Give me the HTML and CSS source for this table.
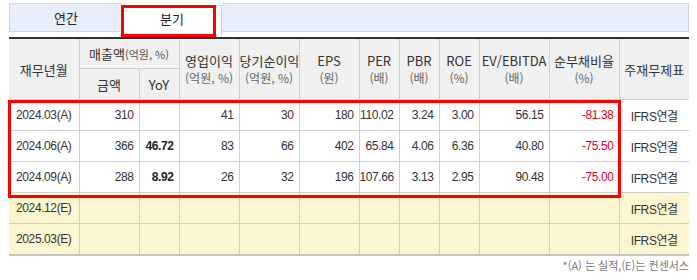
FILE: index.html
```html
<!DOCTYPE html>
<html lang="ko">
<head>
<meta charset="utf-8">
<link rel="stylesheet" href="styles.css">
</head>
<body>
<div class="wrap">
  <div class="tabs">
    <div class="tab tab-annual">연간</div>
    <div class="tab tab-quarter">분기</div>
    <div class="tab tab-rest"></div>
    <div class="mark mark-tab"></div>
  </div>
  <div class="table-box">
    <table class="fin">
      <colgroup>
        <col class="w70"><col class="w60"><col class="w40"><col class="w60"><col class="w60"><col class="w60">
        <col class="w40"><col class="w40"><col class="w40"><col class="w70"><col class="w70"><col class="w70">
      </colgroup>
      <thead>
        <tr class="h1">
          <th rowspan="2">재무년월</th>
          <th colspan="2">매출액<span class="unit-s">(억원, %)</span></th>
          <th rowspan="2">영업이익<br><span class="unit">(억원, %)</span></th>
          <th rowspan="2">당기순이익<br><span class="unit">(억원, %)</span></th>
          <th rowspan="2">EPS<br><span class="unit">(원)</span></th>
          <th rowspan="2">PER<br><span class="unit">(배)</span></th>
          <th rowspan="2">PBR<br><span class="unit">(배)</span></th>
          <th rowspan="2">ROE<br><span class="unit">(%)</span></th>
          <th rowspan="2">EV/EBITDA<br><span class="unit">(배)</span></th>
          <th rowspan="2">순부채비율<br><span class="unit">(%)</span></th>
          <th rowspan="2">주재무제표</th>
        </tr>
        <tr class="h2">
          <th>금액</th>
          <th>YoY</th>
        </tr>
      </thead>
      <tbody>
        <tr>
          <td class="c">2024.03(A)</td><td>310</td><td class="b"></td><td>41</td><td>30</td><td>180</td>
          <td>110.02</td><td>3.24</td><td>3.00</td><td>56.15</td><td class="neg">-81.38</td><td class="c">IFRS연결</td>
        </tr>
        <tr>
          <td class="c">2024.06(A)</td><td>366</td><td class="b">46.72</td><td>83</td><td>66</td><td>402</td>
          <td>65.84</td><td>4.06</td><td>6.36</td><td>40.80</td><td class="neg">-75.50</td><td class="c">IFRS연결</td>
        </tr>
        <tr>
          <td class="c">2024.09(A)</td><td>288</td><td class="b">8.92</td><td>26</td><td>32</td><td>196</td>
          <td>107.66</td><td>3.13</td><td>2.95</td><td>90.48</td><td class="neg">-75.00</td><td class="c">IFRS연결</td>
        </tr>
        <tr class="est">
          <td class="c">2024.12(E)</td><td></td><td></td><td></td><td></td><td></td>
          <td></td><td></td><td></td><td></td><td></td><td class="c">IFRS연결</td>
        </tr>
        <tr class="est">
          <td class="c">2025.03(E)</td><td></td><td></td><td></td><td></td><td></td>
          <td></td><td></td><td></td><td></td><td></td><td class="c">IFRS연결</td>
        </tr>
      </tbody>
    </table>
    <div class="mark mark-rows"></div>
  </div>
  <p class="note">*(A) 는 실적,(E)는 컨센서스</p>
</div>
</body>
</html>
```
FILE: styles.css
```css
html, body {
  margin: 0;
  padding: 0;
  background: #fff;
}
body {
  font-family: "Liberation Sans", "Noto Sans CJK KR", sans-serif;
  font-size: 12px;
  color: #333;
}
.wrap {
  width: 680px;
  padding: 3px 8px 0 9px;
}
.tabs {
  position: relative;
  display: flex;
  align-items: flex-start;
  height: 34px;
}
.tab {
  box-sizing: border-box;
  text-align: center;
  font-family: "Noto Sans CJK KR", sans-serif;
  font-size: 13px;
  color: #222;
}
.tab-annual {
  width: 113px;
  height: 29px;
  line-height: 27px;
  background: #e8eef9;
  border: 1px solid #cdd6e8;
  border-right: none;
}
.tab-quarter {
  width: 100px;
  height: 32px;
  margin-top: 2px;
  line-height: 26px;
  background: #fff;
  border: 1px solid #cdd6e8;
  border-bottom: none;
}
.tab-rest {
  flex: 1;
  height: 29px;
  background: #e8eef9;
  border: 1px solid #cdd6e8;
  border-left: none;
}
.mark {
  position: absolute;
  box-sizing: border-box;
  border: 3px solid #f00;
  pointer-events: none;
}
.mark-tab {
  left: 112px;
  top: 2px;
  width: 95px;
  height: 32px;
}
.table-box {
  position: relative;
}
.mark-rows {
  left: -1px;
  top: 63px;
  width: 613px;
  height: 98px;
}
.fin {
  width: 680px;
  border-collapse: collapse;
  table-layout: fixed;
  border-top: 2px solid #333;
  border-bottom: 2px solid #c4c4c4;
}
.w70 { width: 70px; }
.w60 { width: 60px; }
.w40 { width: 40px; }
.fin th, .fin td {
  padding: 0;
  border: 1px solid #cfcfcf;
  height: 30px;
  white-space: nowrap;
}
.fin tr > :first-child { border-left: none; }
.fin tr > :last-child { border-right: none; }
.fin tr.h2 > :last-child { border-right: 1px solid #cfcfcf; }
.fin th {
  background: #f0f0f0;
  font-weight: normal;
  font-family: "Noto Sans CJK KR", sans-serif;
  font-size: 13px;
  line-height: 17px;
  color: #333;
  text-align: center;
}
.fin .h1 th { height: 29px; }
.unit {
  font-size: 12px;
  color: #666;
}
.unit-s {
  font-size: 11px;
  color: #555;
}
.fin td {
  text-align: right;
  padding-right: 5px;
  font-size: 12px;
  letter-spacing: -0.4px;
  color: #333;
}
.fin td.c {
  text-align: center;
  padding-right: 0;
}
.fin td.b {
  font-weight: bold;
  color: #222;
}
.fin td.neg {
  color: #e0001a;
}
.fin tr.est td {
  background: #fcf6d0;
}
.note {
  margin: 2px 0 0;
  text-align: right;
  font-family: "Noto Sans CJK KR", sans-serif;
  font-size: 11px;
  color: #777;
  line-height: 14px;
}
```
